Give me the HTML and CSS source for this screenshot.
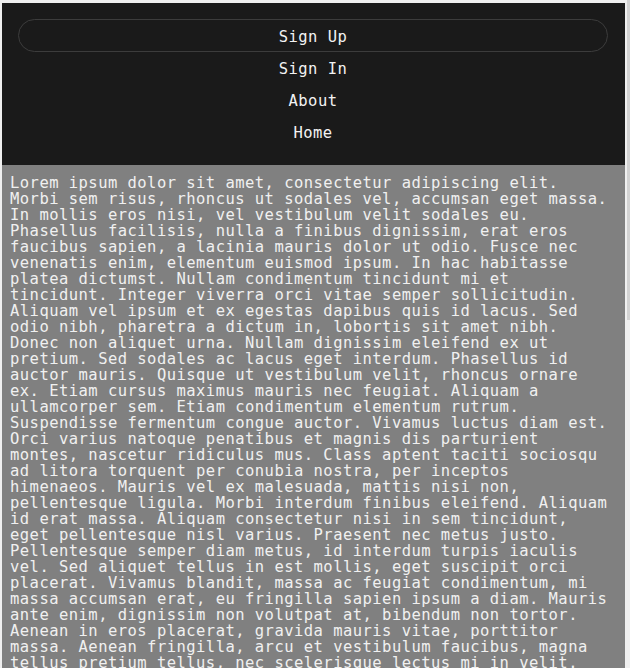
FILE: index.html
```html
<!DOCTYPE html>
<html lang="en">
<head>
<meta charset="utf-8">
<title>Page</title>
<link rel="stylesheet" href="styles.css">
</head>
<body>
<div class="page">
  <nav class="nav">
    <a class="nav-item nav-button" href="#">Sign Up</a>
    <a class="nav-item" href="#">Sign In</a>
    <a class="nav-item" href="#">About</a>
    <a class="nav-item" href="#">Home</a>
  </nav>
  <main class="content">
    <p class="text">Lorem ipsum dolor sit amet, consectetur adipiscing elit. Morbi sem risus, rhoncus ut sodales vel, accumsan eget massa. In mollis eros nisi, vel vestibulum velit sodales eu. Phasellus facilisis, nulla a finibus dignissim, erat eros faucibus sapien, a lacinia mauris dolor ut odio. Fusce nec venenatis enim, elementum euismod ipsum. In hac habitasse platea dictumst. Nullam condimentum tincidunt mi et tincidunt. Integer viverra orci vitae semper sollicitudin. Aliquam vel ipsum et ex egestas dapibus quis id lacus. Sed odio nibh, pharetra a dictum in, lobortis sit amet nibh. Donec non aliquet urna. Nullam dignissim eleifend ex ut pretium. Sed sodales ac lacus eget interdum. Phasellus id auctor mauris. Quisque ut vestibulum velit, rhoncus ornare ex. Etiam cursus maximus mauris nec feugiat. Aliquam a ullamcorper sem. Etiam condimentum elementum rutrum. Suspendisse fermentum congue auctor. Vivamus luctus diam est. Orci varius natoque penatibus et magnis dis parturient montes, nascetur ridiculus mus. Class aptent taciti sociosqu ad litora torquent per conubia nostra, per inceptos himenaeos. Mauris vel ex malesuada, mattis nisi non, pellentesque ligula. Morbi interdum finibus eleifend. Aliquam id erat massa. Aliquam consectetur nisi in sem tincidunt, eget pellentesque nisl varius. Praesent nec metus justo. Pellentesque semper diam metus, id interdum turpis iaculis vel. Sed aliquet tellus in est mollis, eget suscipit orci placerat. Vivamus blandit, massa ac feugiat condimentum, mi massa accumsan erat, eu fringilla sapien ipsum a diam. Mauris ante enim, dignissim non volutpat at, bibendum non tortor. Aenean in eros placerat, gravida mauris vitae, porttitor massa. Aenean fringilla, arcu et vestibulum faucibus, magna tellus pretium tellus, nec scelerisque lectus mi in velit. Nulla facilisi. Curabitur vitae lorem sed nunc tempus posuere. Donec at ligula vel arcu volutpat luctus.</p>
  </main>
</div>
<div class="scroll-thumb"></div>
</body>
</html>
```
FILE: styles.css
```css
html, body {
  margin: 0;
  padding: 0;
}
body {
  background: #efefef;
  font-family: "DejaVu Sans Mono", "Liberation Mono", monospace;
  font-size: 15.5px;
  letter-spacing: 0.46px;
  overflow: hidden;
  height: 668px;
}
.page {
  padding: 3px 5px 0 2px;
}
.nav {
  background: #1a1a1a;
  padding: 16px 17px 17px 16px;
  display: flex;
  flex-direction: column;
}
.nav-item {
  display: block;
  height: 29px;
  padding-top: 3px;
  line-height: 29px;
  text-align: center;
  color: #f2f2f2;
  text-decoration: none;
}
.nav-button {
  height: 28px;
  line-height: 28px;
  border: 1px solid #3c3c3c;
  border-radius: 17px;
}
.content {
  background: #808080;
  padding: 10px 13px 8px 8px;
  min-height: 600px;
}
.text {
  margin: 0;
  color: #f0f0f0;
  line-height: 16px;
}
.scroll-thumb {
  position: fixed;
  right: 0;
  top: 0;
  width: 3px;
  height: 320px;
  background: #d2d2d2;
}
```
